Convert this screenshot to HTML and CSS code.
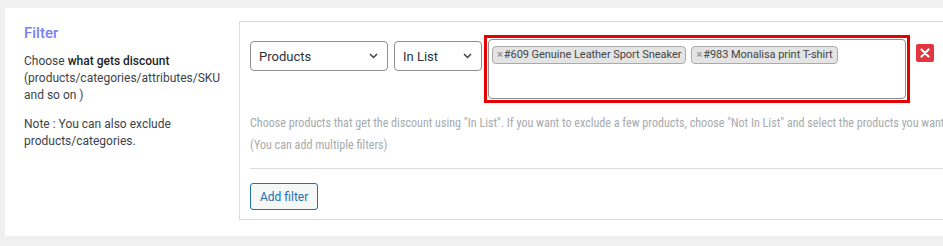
FILE: index.html
```html
<!DOCTYPE html>
<html lang="en">
<head>
<meta charset="utf-8">
<title>Filter</title>
<link rel="stylesheet" href="styles.css">
</head>
<body>
<div class="panel">
  <div class="side">
    <h2 class="title">Filter</h2>
    <p class="desc">Choose <b>what gets discount</b> (products/categories/attributes/SKU and so on )</p>
    <p class="desc">Note : You can also exclude products/categories.</p>
  </div>
  <div class="box">
    <div class="row">
      <div class="sel sel-type"><span>Products</span>
        <svg class="chev" width="9" height="6" viewBox="0 0 9 6"><path d="M1 1l3.5 3.5L8 1" fill="none" stroke="#3c434a" stroke-width="1.5"/></svg>
      </div>
      <div class="sel sel-op"><span>In List</span>
        <svg class="chev" width="9" height="6" viewBox="0 0 9 6"><path d="M1 1l3.5 3.5L8 1" fill="none" stroke="#3c434a" stroke-width="1.5"/></svg>
      </div>
      <div class="tagwrap">
        <div class="tags">
          <span class="chip"><span class="x">×</span>#609 Genuine Leather Sport Sneaker</span>
          <span class="chip"><span class="x">×</span>#983 Monalisa print T-shirt</span>
        </div>
      </div>
      <div class="del">
        <svg width="10" height="10" viewBox="0 0 10 10"><path d="M1.5 1.5l7 7M8.5 1.5l-7 7" stroke="#fff" stroke-width="2.2" stroke-linecap="round"/></svg>
      </div>
    </div>
    <p class="hint hint-first">Choose products that get the discount using "In List". If you want to exclude a few products, choose "Not In List" and select the products you wanted to exclude from discount.</p>
    <p class="hint">(You can add multiple filters)</p>
    <div class="rule"></div>
    <button class="add">Add filter</button>
  </div>
</div>
</body>
</html>
```
FILE: styles.css
```css
html, body {
  margin: 0;
  padding: 0;
  overflow: hidden;
  background: #f0f0f1;
}
body {
  font-family: Roboto, "Noto Sans", "Liberation Sans", sans-serif;
  color: #3c434a;
}
.panel {
  display: flex;
  align-items: flex-start;
  margin: 8px 0 0 5px;
  width: 1150px;
  height: 228px;
  background: #fff;
}
.side {
  width: 234px;
  box-sizing: border-box;
  padding: 16px 0 0 19px;
  flex: none;
}
.title {
  margin: 0;
  font-size: 15px;
  line-height: 19px;
  font-weight: 500;
  color: #787ff6;
}
.desc {
  margin: 10px 0 0;
  font-size: 12px;
  line-height: 17px;
  color: #3c434a;
}
.desc + .desc {
  margin-top: 12px;
}
.desc b {
  font-weight: 500;
  color: #1d2327;
}
.box {
  margin-top: 13px;
  flex: 1;
  border: 1px solid #dcdcde;
  padding: 13px 10px 9px 10px;
}
.row {
  display: flex;
  align-items: flex-start;
}
.sel {
  margin-top: 6px;
  height: 30px;
  box-sizing: border-box;
  border: 1px solid #8c8f94;
  border-radius: 4px;
  padding: 0 9px 0 8px;
  display: flex;
  align-items: center;
  justify-content: space-between;
  font-size: 13px;
  color: #2c3338;
}
.sel-type { width: 138px; }
.sel-op { width: 88px; margin-left: 6px; }
.tagwrap {
  margin-left: 2px;
  border: 3px solid #e60000;
  padding: 1px;
}
.tags {
  width: 418px;
  height: 60px;
  box-sizing: border-box;
  border: 1px solid #8c8f94;
  border-radius: 4px;
  padding: 6px 3px;
  display: flex;
  align-items: flex-start;
  gap: 5px;
}
.chip {
  height: 18px;
  box-sizing: border-box;
  border: 1px solid #aaa;
  border-radius: 4px;
  background: #e4e4e4;
  padding: 0 4px 0 4px;
  font-size: 11px;
  line-height: 16px;
  letter-spacing: -0.05px;
  color: #444;
  white-space: nowrap;
}
.chip .x {
  color: #999;
  margin-right: 1px;
  font-weight: 700;
}
.del {
  margin: 9px 0 0 6px;
  width: 18px;
  height: 18px;
  border-radius: 2px;
  background: #e2363f;
  display: flex;
  align-items: center;
  justify-content: center;
}
.hint {
  margin: 4px 0 0;
  font-family: "Roboto Condensed", "Liberation Sans Narrow", Roboto, sans-serif;
  font-stretch: condensed;
  font-size: 12.1px;
  line-height: 18px;
  color: #a7aaad;
  white-space: nowrap;
}
.hint-first {
  margin-top: 11px;
}
.rule {
  height: 1px;
  background: #dcdcde;
  margin-top: 14px;
}
.add {
  margin-top: 14px;
  height: 27px;
  padding: 0 9px;
  border: 1px solid #2271b1;
  border-radius: 3px;
  background: #f6f7f7;
  color: #2271b1;
  font-family: Roboto, sans-serif;
  font-size: 12px;
}
```
